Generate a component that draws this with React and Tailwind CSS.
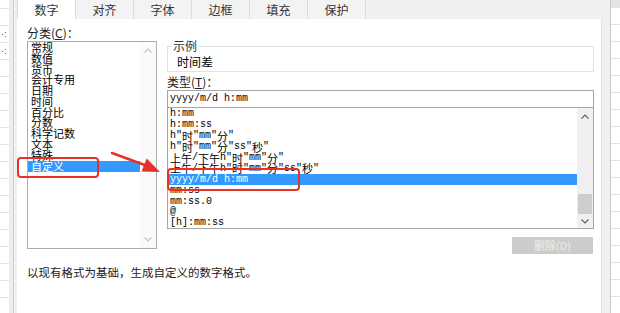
import React from 'react'

const CATEGORIES = ['常规', '数值', '货币', '会计专用', '日期', '时间', '百分比', '分数', '科学记数', '文本', '特殊', '自定义']

const FORMATS = [
  'h:mm',
  'h:mm:ss',
  'h"时"mm"分"',
  'h"时"mm"分"ss"秒"',
  '上午/下午h"时"mm"分"',
  '上午/下午h"时"mm"分"ss"秒"',
  'yyyy/m/d h:mm',
  'mm:ss',
  'mm:ss.0',
  '@',
  '[h]:mm:ss',
]

const TABS = ['数字', '对齐', '字体', '边框', '填充', '保护']

const cjk = { fontFamily: '"Noto Sans CJK SC", "Noto Sans", sans-serif' }

// split a format string into ascii / cjk runs so each gets its own font
const FormatText = ({ text }) => {
  const runs = text.match(/[\u0000-\u00ff]+|[^\u0000-\u00ff]+/g) || []
  return runs.map((r, i) =>
    /^[\u0000-\u00ff]+$/.test(r) ? (
      <span key={i} className="text-[10px] leading-none whitespace-pre font-['Liberation_Mono',monospace]">{r}</span>
    ) : (
      <span key={i} className="text-[11px] leading-none font-['Noto_Sans_CJK_SC',sans-serif]">{r}</span>
    )
  )
}

const Chevron = ({ up, color }) => (
  <svg width="8" height="5" viewBox="0 0 8 5" fill="none">
    <polyline
      points={up ? '0.5,4.5 4,1 7.5,4.5' : '0.5,0.5 4,4 7.5,0.5'}
      stroke={color}
      strokeWidth="1.2"
    />
  </svg>
)

const SheetStrip = ({ left }) => (
  <div className="h-full bg-white flex flex-col overflow-hidden">
    {left ? (
      <>
        <div className="h-[9px] shrink-0 border-b border-[#e2e2e2]" />
        <div className="h-[17px] shrink-0 border-b border-[#e2e2e2]" />
        <div className="h-[17px] shrink-0 border-b border-[#e2e2e2] flex items-center text-[9px] leading-none text-[#2b3f5c] font-['Liberation_Sans',sans-serif]">
          <span className="pl-[1px]">·:</span>
        </div>
        <div className="h-[17px] shrink-0 border-b border-[#e2e2e2] flex items-center text-[9px] leading-none text-[#2b3f5c] font-['Liberation_Sans',sans-serif]">
          <span className="pl-[1px]">·:</span>
        </div>
      </>
    ) : (
      <div className="h-[8px] shrink-0 bg-[#e4e4e4]" />
    )}
    {Array.from({ length: 18 }).map((_, i) => (
      <div key={i} className="h-[17px] shrink-0 border-b border-[#e2e2e2]" />
    ))}
  </div>
)

export default function App() {
  return (
    <div className="relative w-[620px] h-[313px] flex overflow-hidden bg-white text-black" style={cjk}>
      {/* spreadsheet behind, left */}
      <div className="w-[9px] shrink-0">
        <SheetStrip left />
      </div>
      <div className="w-[4px] shrink-0 bg-[#ececec]" />
      <div className="w-[1px] shrink-0 bg-[#cfcfcf]" />
      <div className="w-[3px] shrink-0 bg-[#f0f0f0]" />

      {/* dialog */}
      <div className="w-[585px] shrink-0 flex flex-col">
        <div className="h-[19px] shrink-0 flex bg-[#f0f0f0]">
          {TABS.map((t, i) => (
            <div
              key={t}
              className={`h-full flex items-center justify-center pt-[1px] text-[12px] text-[#333] border-r border-[#dcdcdc] ${
                i === 0 ? 'w-[59px] bg-white border-l' : 'w-[58px] bg-[#f3f3f3]'
              }`}
            >
              {t}
            </div>
          ))}
        </div>

        <div className="flex-1 bg-white border-r border-[#e2e2e2] pl-[10px] pt-[5px]">
          <div className="flex gap-[10px]">
            {/* category column */}
            <div className="w-[130px] flex flex-col">
              <div className="h-[17px] text-[12px] leading-[17px] text-[#222]">
                分类(<span className="underline">C</span>)：
              </div>
              <div className="h-[208px] border border-[#adadad] flex">
                <div className="flex-1">
                  {CATEGORIES.map((c) => (
                    <div
                      key={c}
                      className={`h-[10.8px] flex items-center text-[11px] leading-none pl-[3px] whitespace-nowrap ${
                        c === '自定义' ? 'bg-[#3399ff] text-white' : ''
                      }`}
                    >
                      {c}
                    </div>
                  ))}
                </div>
                <div className="w-[16px] bg-[#fafafa] flex flex-col items-center justify-between py-[6px]">
                  <Chevron up color="#c4c4c4" />
                  <Chevron color="#c4c4c4" />
                </div>
              </div>
            </div>

            {/* type column */}
            <div className="w-[427px] flex flex-col">
              <div className="relative mt-[22px] h-[26px] border border-[#e2e2e2] pl-[9px] pt-[8px] text-[12px] leading-[14px]">
                <span className="absolute -top-[8px] left-[4px] bg-white px-[1px] text-[12px] leading-[14px] text-[#333]">示例</span>
                时间差
              </div>
              <div className="h-[18px] flex items-center text-[12px] text-[#222] pt-[1px]">
                类型(<span className="underline">T</span>)：
              </div>
              <div className="h-[17px] border border-b-0 border-[#a6a6a6] pl-[2px] flex items-center">
                <FormatText text="yyyy/m/d h:mm" />
              </div>
              <div className="h-[122px] border border-[#a6a6a6] flex">
                <div className="flex-1 pt-[1px]">
                  {FORMATS.map((f) => (
                    <div
                      key={f}
                      className={`h-[10.9px] flex items-center pl-[2px] whitespace-nowrap ${
                        f === 'yyyy/m/d h:mm' ? 'bg-[#3399ff] text-white' : ''
                      }`}
                    >
                      <FormatText text={f} />
                    </div>
                  ))}
                </div>
                <div className="w-[16px] bg-[#f0f0f0] flex flex-col items-center pt-[6px] pb-[4px]">
                  <Chevron up color="#606060" />
                  <div className="flex-1" />
                  <div className="w-[14px] h-[20px] bg-[#cdcdcd] mb-[5px]" />
                  <Chevron color="#606060" />
                </div>
              </div>
              <div className="self-end mr-[1px] mt-[8px] w-[81px] h-[17px] bg-[#cccccc] flex items-center justify-center text-[11px] text-[#ececec]">
                删除(D)
              </div>
            </div>
          </div>

          <div className="mt-[11px] text-[11.5px] leading-[14px] text-[#222]">
            以现有格式为基础，生成自定义的数字格式。
          </div>
        </div>
      </div>

      <div className="w-[8px] shrink-0 bg-[#f0f0f0]" />
      <div className="w-[1px] shrink-0 bg-[#c8c8c8]" />
      <div className="w-[9px] shrink-0">
        <SheetStrip />
      </div>

      {/* annotations drawn over the dialog */}
      <div className="absolute left-[17px] top-[157px] w-[82px] h-[21px] border-[2.5px] border-[#e8302a] rounded-[4px]" />
      <div className="absolute left-[167px] top-[168px] w-[133px] h-[23px] border-[2.5px] border-[#e8302a] rounded-[4px]" />
      <svg className="absolute left-0 top-0" width="620" height="313" viewBox="0 0 620 313" fill="none">
        <line x1="112" y1="153" x2="146" y2="165.5" stroke="#e8302a" strokeWidth="2.5" strokeLinecap="round" />
        <polygon points="160,172 141.5,171.6 146.7,158.6" fill="#e8302a" />
      </svg>
    </div>
  )
}
